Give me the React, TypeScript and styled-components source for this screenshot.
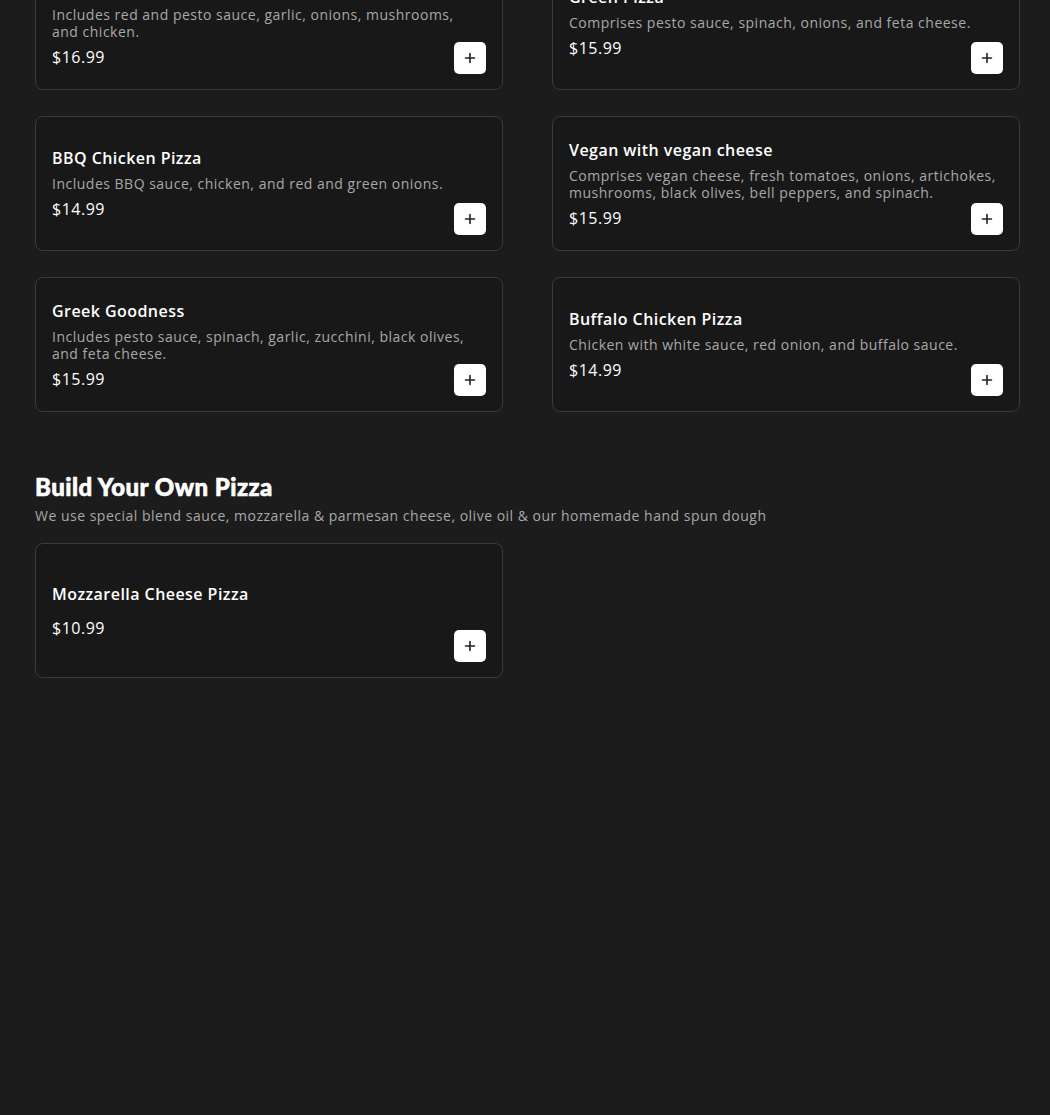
import React from "react";
import styled, { createGlobalStyle } from "styled-components";

const Global = createGlobalStyle`
  html, body { margin: 0; padding: 0; background: #1c1c1c; }
  body { font-family: "Open Sans", "Noto Sans", sans-serif; color: #fff; overflow: hidden; }
`;

const Page = styled.main`
  padding: 0 30px 0 35px;
  margin-top: -45px;
`;

const Grid = styled.div`
  display: grid;
  grid-template-columns: 468px 468px;
  column-gap: 49px;
  row-gap: 26px;
`;

const Card = styled.article`
  box-sizing: border-box;
  height: 135px;
  padding: 16px;
  background: #181818;
  border: 1px solid #3a3a3a;
  border-radius: 8px;
  display: grid;
  grid-template: 1fr / 1fr;
`;

const Content = styled.div`
  grid-area: 1 / 1;
  align-self: center;
  display: flex;
  flex-direction: column;
  gap: 7px;
  max-width: 429px;
`;

const Title = styled.h3`
  margin: 0;
  font-size: 16px;
  line-height: 20px;
  font-weight: 600;
  color: #fff;
  letter-spacing: 0.45px;
`;

const Desc = styled.p`
  margin: 0;
  font-size: 14px;
  line-height: 17px;
  color: #a8a8a8;
  letter-spacing: 0.5px;
`;

const Price = styled.div`
  font-size: 16px;
  line-height: 20px;
  color: #fff;
  letter-spacing: 0.5px;
`;

const AddButton = styled.button`
  grid-area: 1 / 1;
  align-self: end;
  justify-self: end;
  width: 32px;
  height: 32px;
  margin-bottom: -1px;
  border: none;
  border-radius: 5px;
  background: #fff;
  display: flex;
  align-items: center;
  justify-content: center;
  padding: 0;
  cursor: pointer;
`;

const Section = styled.section`
  margin-top: 60px;
`;

const SectionTitle = styled.h2`
  margin: 0;
  font-family: Lato, "Open Sans", sans-serif;
  font-weight: 900;
  font-size: 24px;
  line-height: 30px;
  color: #fff;
  letter-spacing: 0.45px;
  -webkit-text-stroke: 0.6px #fff;
`;

const SectionSub = styled.p`
  margin: 5px 0 19px;
  font-size: 14px;
  line-height: 17px;
  color: #a8a8a8;
  letter-spacing: 0.5px;
`;

type Item = { name: string; desc: string; price: string };

const items: Item[] = [
  { name: "Chicken Pesto Pizza", desc: "Includes red and pesto sauce, garlic, onions, mushrooms, and chicken.", price: "$16.99" },
  { name: "Green Pizza", desc: "Comprises pesto sauce, spinach, onions, and feta cheese.", price: "$15.99" },
  { name: "BBQ Chicken Pizza", desc: "Includes BBQ sauce, chicken, and red and green onions.", price: "$14.99" },
  { name: "Vegan with vegan cheese", desc: "Comprises vegan cheese, fresh tomatoes, onions, artichokes, mushrooms, black olives, bell peppers, and spinach.", price: "$15.99" },
  { name: "Greek Goodness", desc: "Includes pesto sauce, spinach, garlic, zucchini, black olives, and feta cheese.", price: "$15.99" },
  { name: "Buffalo Chicken Pizza", desc: "Chicken with white sauce, red onion, and buffalo sauce.", price: "$14.99" },
];

const Plus = () => (
  <svg width="12" height="12" viewBox="0 0 12 12" fill="none">
    <path d="M6 1.5v9M1.5 6h9" stroke="#222" strokeWidth="1.6" strokeLinecap="round" />
  </svg>
);

const MenuCard = ({ item }: { item: Item }) => (
  <Card>
    <Content>
      <Title>{item.name}</Title>
      <Desc>{item.desc}</Desc>
      <Price>{item.price}</Price>
    </Content>
    <AddButton aria-label={`Add ${item.name}`}>
      <Plus />
    </AddButton>
  </Card>
);

export default function App() {
  return (
    <>
      <Global />
      <Page>
        <Grid>
          {items.map((it) => (
            <MenuCard key={it.name} item={it} />
          ))}
        </Grid>
        <Section>
          <SectionTitle>Build Your Own Pizza</SectionTitle>
          <SectionSub>
            We use special blend sauce, mozzarella &amp; parmesan cheese, olive oil &amp; our homemade hand spun dough
          </SectionSub>
          <Grid>
            <MenuCard item={{ name: "Mozzarella Cheese Pizza", desc: "", price: "$10.99" }} />
          </Grid>
        </Section>
      </Page>
    </>
  );
}
